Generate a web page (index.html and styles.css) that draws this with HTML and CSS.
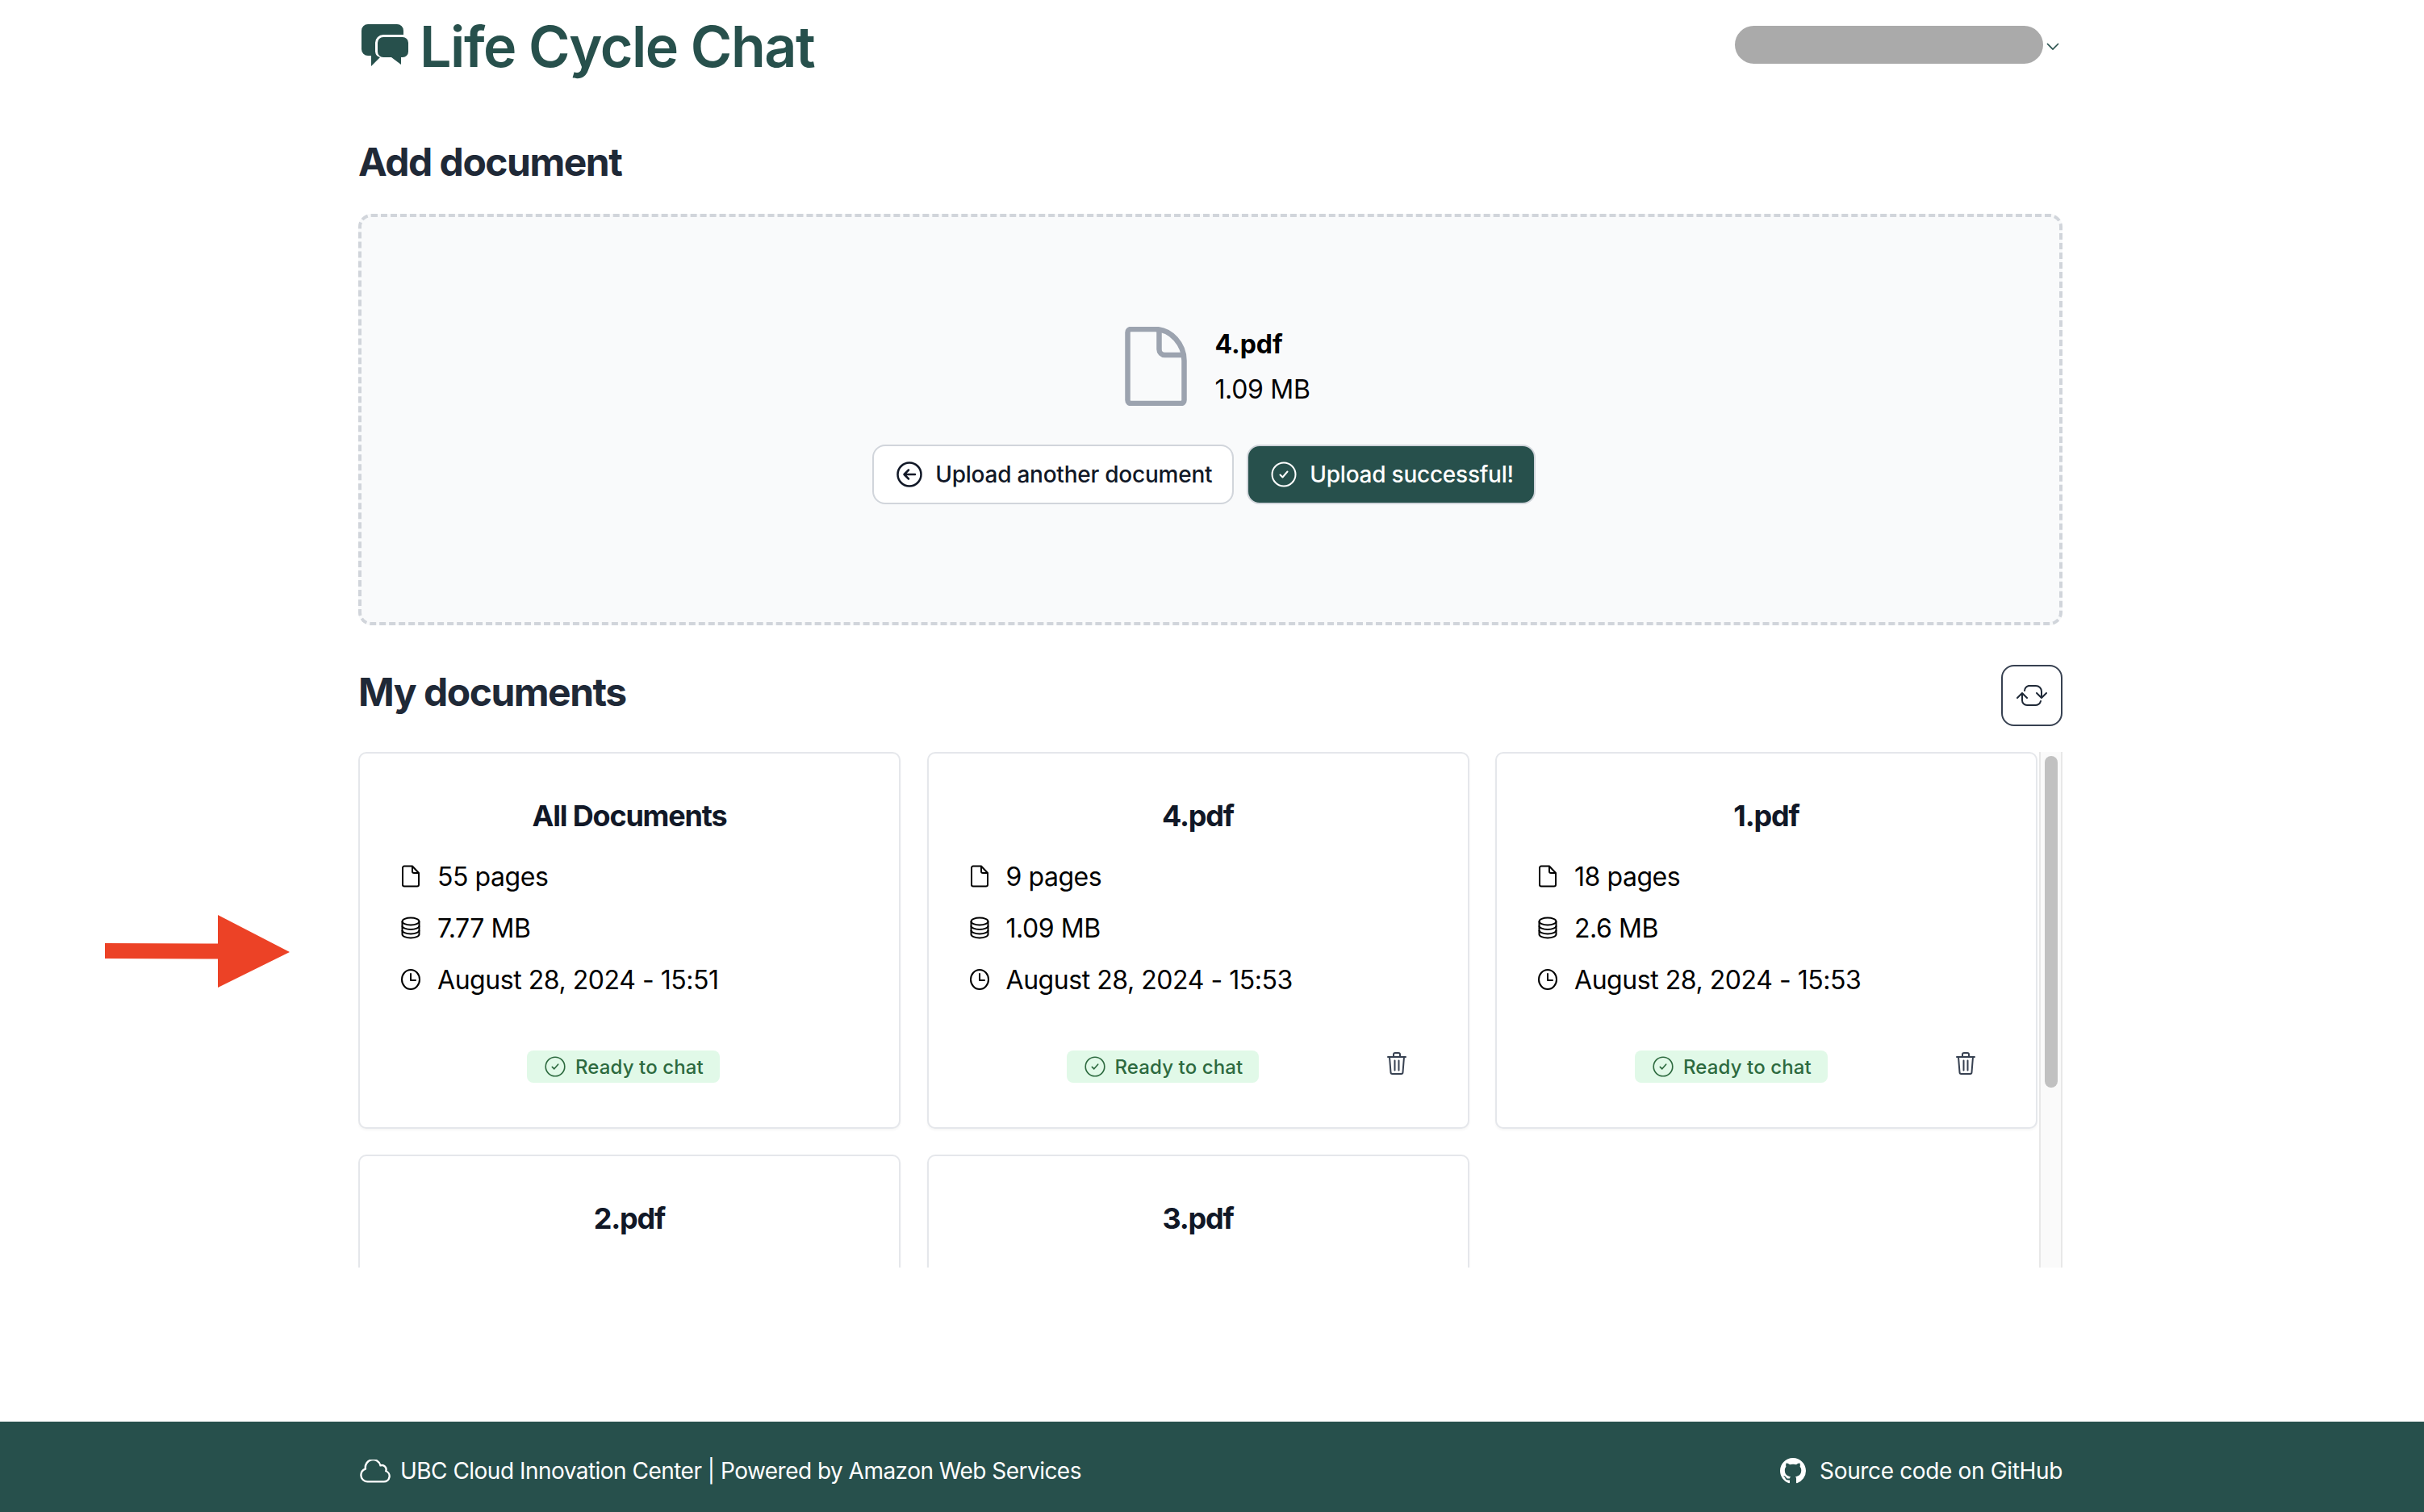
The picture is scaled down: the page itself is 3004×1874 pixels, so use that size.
FILE: index.html
```html
<!DOCTYPE html>
<html lang="en">
<head>
    <meta charset="UTF-8">
    <meta name="viewport" content="width=device-width, initial-scale=1.0">
    <title>Life Cycle Chat</title>
    <link rel="stylesheet" href="styles.css">
</head>
<body>
    <svg width="0" height="0" class="icon-defs">
        <symbol id="i-file" viewBox="0 0 24 28"><path d="M14 1.500H4a2 2 0 0 0-2 2v21a2 2 0 0 0 2 2h16a2 2 0 0 0 2-2V10L14 1.500zM14 1.500V8a2 2 0 0 0 2 2h6" fill="none" stroke="currentColor" stroke-width="2" stroke-linejoin="round"/></symbol>
        <symbol id="i-db" viewBox="0 0 24 28"><g fill="none" stroke="currentColor" stroke-width="2"><ellipse cx="12" cy="6" rx="10.500" ry="4.500"/><path d="M1.500 6v16c0 2.500 4.700 4.500 10.500 4.500S22.500 24.500 22.500 22V6"/><path d="M1.500 11.500c0 2.500 4.700 4.500 10.500 4.500s10.500-2 10.500-4.500M1.500 17c0 2.500 4.700 4.500 10.500 4.500s10.500-2 10.500-4.500"/></g></symbol>
        <symbol id="i-clock" viewBox="0 0 24 26"><g fill="none" stroke="currentColor" stroke-width="2"><ellipse cx="12" cy="13" rx="11" ry="12"/><path d="M12 6v8h6" stroke-linecap="round" stroke-linejoin="round"/></g></symbol>
        <symbol id="i-check" viewBox="0 0 32 32"><g fill="none" stroke="currentColor" stroke-width="2"><circle cx="16" cy="16" r="14.500"/><path d="M11.500 16.500l3 3 6-7" stroke-linecap="round" stroke-linejoin="round"/></g></symbol>
        <symbol id="i-trash" viewBox="0 0 24 28"><g fill="none" stroke="currentColor" stroke-width="2" stroke-linecap="round" stroke-linejoin="round"><path d="M1 6h22M8 6V3a2 2 0 0 1 2-2h4a2 2 0 0 1 2 2v3"/><path d="M3 6l1.500 19a2 2 0 0 0 2 2h11a2 2 0 0 0 2-2L21 6"/><path d="M9.500 10.500v12M14.500 10.500v12"/></g></symbol>
    </svg>

    <div class="arrow-note">
        <svg width="229" height="90" viewBox="0 0 229 90"><path d="M0 35l140 .5V0l89 46-89 44V54.500L0 54z" fill="#ec4226"/></svg>
    </div>

    <main class="page">
        <header class="topbar">
            <div class="brand">
                <svg class="brand-icon" viewBox="0 0 58 52" width="58" height="52" fill="#27504c">
                    <path d="M8 0h36a8 8 0 0 1 8 8v5H27a10 10 0 0 0-10 10v11a8 8 0 0 0 6 7L12 52V39H8a8 8 0 0 1-8-8V8a8 8 0 0 1 8-8z"/>
                    <path d="M27 16h24a7 7 0 0 1 7 7v11a7 7 0 0 1-7 7h-2v9l-12-9H27a7 7 0 0 1-7-7V23a7 7 0 0 1 7-7z"/>
                </svg>
                <span class="brand-name">Life Cycle Chat</span>
            </div>
            <div class="user-menu">
                <div class="user-pill"></div>
                <svg class="chevron" width="16" height="10" viewBox="0 0 16 10"><path d="M1 1l7 7 7-7" fill="none" stroke="#27504c" stroke-width="1.600"/></svg>
            </div>
        </header>

        <h2 class="section-title add-title">Add document</h2>
        <section class="dropzone">
            <div class="file-row">
                <svg width="77" height="98" viewBox="0 0 76 98" fill="none" stroke="#9ca3af" stroke-width="6.500" stroke-linejoin="round">
                    <path d="M37 3H7a4 4 0 0 0-4 4v84a4 4 0 0 0 4 4h62a4 4 0 0 0 4-4V42C73 22 57 3 37 3z"/>
                    <path d="M42 5v23a7 7 0 0 0 7 7h23"/>
                </svg>
                <div class="file-info">
                    <div class="file-name">4.pdf</div>
                    <div class="file-size">1.09 MB</div>
                </div>
            </div>
            <div class="button-row">
                <button class="btn btn-light">
                    <svg width="32" height="32" viewBox="0 0 32 32" fill="none" stroke="currentColor" stroke-width="2.500" stroke-linecap="round" stroke-linejoin="round"><circle cx="16" cy="16" r="14.500"/><path d="M23 16H10M15 10.500L9.500 16l5.500 5.500"/></svg>
                    Upload another document
                </button>
                <button class="btn btn-dark">
                    <svg width="32" height="32"><use href="#i-check"/></svg>
                    Upload successful!
                </button>
            </div>
        </section>

        <div class="docs-head">
            <h2 class="section-title">My documents</h2>
            <button class="refresh">
                <svg width="38" height="28" viewBox="0 0 38 28" fill="none" stroke="currentColor" stroke-width="2" stroke-linecap="round" stroke-linejoin="round">
                    <path d="M10 8a7 7 0 0 1 5-6h9a7 7 0 0 1 7 7v8M25 11l6 6 6-6"/>
                    <path d="M7 11v9a6 6 0 0 0 6 6h11a7 7 0 0 0 6-5M1 17l6-6 6 6"/>
                </svg>
            </button>
        </div>

        <div class="doc-scroll">
            <div class="doc-grid">
                <article class="doc-card doc-card-all">
                    <h3 class="doc-title">All Documents</h3>
                    <ul class="doc-meta">
                        <li><svg width="24" height="28"><use href="#i-file"/></svg>55 pages</li>
                        <li><svg width="24" height="28"><use href="#i-db"/></svg>7.77 MB</li>
                        <li><svg width="24" height="26"><use href="#i-clock"/></svg>August 28, 2024 - 15:51</li>
                    </ul>
                    <div class="doc-foot">
                        <span class="badge"><svg width="26" height="26"><use href="#i-check"/></svg>Ready to chat</span>
                    </div>
                </article>
                <article class="doc-card">
                    <h3 class="doc-title">4.pdf</h3>
                    <ul class="doc-meta">
                        <li><svg width="24" height="28"><use href="#i-file"/></svg>9 pages</li>
                        <li><svg width="24" height="28"><use href="#i-db"/></svg>1.09 MB</li>
                        <li><svg width="24" height="26"><use href="#i-clock"/></svg>August 28, 2024 - 15:53</li>
                    </ul>
                    <div class="doc-foot">
                        <span class="badge"><svg width="26" height="26"><use href="#i-check"/></svg>Ready to chat</span>
                        <svg class="trash" width="24" height="28"><use href="#i-trash"/></svg>
                    </div>
                </article>
                <article class="doc-card">
                    <h3 class="doc-title">1.pdf</h3>
                    <ul class="doc-meta">
                        <li><svg width="24" height="28"><use href="#i-file"/></svg>18 pages</li>
                        <li><svg width="24" height="28"><use href="#i-db"/></svg>2.6 MB</li>
                        <li><svg width="24" height="26"><use href="#i-clock"/></svg>August 28, 2024 - 15:53</li>
                    </ul>
                    <div class="doc-foot">
                        <span class="badge"><svg width="26" height="26"><use href="#i-check"/></svg>Ready to chat</span>
                        <svg class="trash" width="24" height="28"><use href="#i-trash"/></svg>
                    </div>
                </article>
                <article class="doc-card">
                    <h3 class="doc-title">2.pdf</h3>
                </article>
                <article class="doc-card">
                    <h3 class="doc-title">3.pdf</h3>
                </article>
            </div>
            <div class="scroll-track"><div class="scroll-thumb"></div></div>
        </div>
    </main>

    <footer class="site-footer">
        <div class="footer-item">
            <svg width="38" height="29" viewBox="1.500 4.500 21 15.750" fill="none" stroke="#fff" stroke-width="1.300" stroke-linejoin="round"><path d="M2.250 15a4.500 4.500 0 0 0 4.500 4.500H18a3.750 3.750 0 0 0 1.332-7.257 3 3 0 0 0-3.758-3.848 5.250 5.250 0 0 0-10.233 2.330A4.500 4.500 0 0 0 2.250 15z"/></svg>
            <span>UBC Cloud Innovation Center | Powered by Amazon Web Services</span>
        </div>
        <div class="footer-item footer-source">
            <svg width="32" height="32" viewBox="0 0 16 16" fill="#fff"><path d="M8 0C3.580 0 0 3.580 0 8c0 3.540 2.290 6.530 5.470 7.590.4.070.55-.17.55-.38 0-.19-.01-.82-.01-1.490-2.010.37-2.530-.49-2.690-.94-.09-.23-.48-.94-.82-1.130-.28-.15-.68-.52-.01-.53.63-.01 1.080.58 1.230.82.72 1.210 1.870.87 2.330.66.07-.52.28-.87.51-1.070-1.780-.2-3.640-.89-3.640-3.950 0-.87.31-1.590.82-2.150-.08-.2-.36-1.020.08-2.120 0 0 .67-.21 2.200.82.64-.18 1.320-.27 2-.27.68 0 1.360.09 2 .27 1.530-1.040 2.200-.82 2.200-.82.44 1.100.16 1.920.08 2.120.51.56.82 1.270.82 2.150 0 3.070-1.870 3.750-3.650 3.950.29.25.54.73.54 1.480 0 1.070-.01 1.930-.01 2.200 0 .21.15.46.55.38A8.013 8.013 0 0 0 16 8c0-4.420-3.580-8-8-8z"/></svg>
            <span>Source code on GitHub</span>
        </div>
    </footer>
</body>
</html>
```

FILE: styles.css
```css
* {
    box-sizing: border-box;
}
html, body {
    height: 100%;
}
body {
    margin: 0;
    display: flex;
    flex-direction: column;
    min-height: 1874px;
    overflow: hidden;
    font-family: Inter, "Noto Sans", sans-serif;
    font-size: 32px;
    color: #000;
    background-color: #fff;
}
.icon-defs {
    position: absolute;
}
.arrow-note {
    position: absolute;
    left: 130px;
    top: 1134px;
    line-height: 0;
}
.page {
    flex: 1;
    width: 2112px;
    margin-left: 444px;
}
.topbar {
    display: flex;
    justify-content: space-between;
    align-items: center;
    height: 112px;
}
.brand {
    display: flex;
    align-items: center;
    gap: 14px;
    padding-left: 4px;
}
.brand-name {
    margin-top: 3px;
    font-size: 70px;
    line-height: 80px;
    font-weight: 600;
    letter-spacing: -1.5px;
    color: #27504c;
}
.user-menu {
    display: flex;
    align-items: center;
    gap: 4px;
    margin-right: 4px;
}
.user-pill {
    width: 382px;
    height: 47px;
    margin-top: -1px;
    border-radius: 24px;
    background-color: #aaa;
}
.chevron {
    margin-top: 4px;
}
.section-title {
    margin: 0;
    font-size: 48px;
    line-height: 64px;
    font-weight: 700;
    letter-spacing: -1.5px;
    color: #1f2937;
}
.add-title {
    margin-top: 57px;
    margin-bottom: 32px;
}
.dropzone {
    height: 510px;
    padding-top: 132px;
    display: flex;
    flex-direction: column;
    align-items: center;
    border: 4px dashed #d1d5db;
    border-radius: 16px;
    background-color: #f9fafb;
}
.file-row {
    display: flex;
    align-items: center;
    gap: 34px;
    margin-left: 18px;
}
.file-info {
    padding-top: 2px;
}
.file-name {
    font-weight: 700;
    line-height: 48px;
    margin-bottom: 8px;
}
.file-size {
    line-height: 48px;
    letter-spacing: -0.3px;
}
.button-row {
    display: flex;
    gap: 16px;
    margin-top: 44px;
    margin-right: 16px;
}
.btn {
    display: flex;
    align-items: center;
    gap: 16px;
    height: 74px;
    padding: 0 25px 0 28px;
    font-family: inherit;
    font-size: 28px;
    font-weight: 500;
    letter-spacing: -0.24px;
    border: 2px solid #d1d5db;
    border-radius: 16px;
    cursor: pointer;
}
.btn-light {
    background-color: #fff;
    color: #111827;
}
.btn-dark {
    background-color: #27504c;
    color: #fff;
}
.docs-head {
    display: flex;
    justify-content: space-between;
    align-items: flex-start;
    margin-top: 49px;
    margin-bottom: 32px;
}
.docs-head .section-title {
    margin-top: 2px;
}
.refresh {
    display: flex;
    align-items: center;
    justify-content: center;
    width: 76px;
    height: 76px;
    padding: 0;
    border: 2px solid #374151;
    border-radius: 16px;
    background-color: #fff;
    color: #1f2937;
    cursor: pointer;
}
.doc-scroll {
    display: flex;
    justify-content: space-between;
    height: 639px;
}
.doc-grid {
    display: grid;
    grid-template-columns: repeat(3, 672px);
    grid-auto-rows: 467px;
    gap: 32px 32.5px;
    overflow: hidden;
    padding-bottom: 2px;
    width: 2081px;
}
.scroll-track {
    width: 29px;
    padding: 5px 5px 0;
    background-color: #fafafa;
    border-left: 2px solid #e8e8e8;
    border-right: 2px solid #e8e8e8;
}
.scroll-thumb {
    width: 16px;
    height: 411px;
    border-radius: 8px;
    background-color: #c1c1c1;
}
.doc-card {
    padding: 49px 51px 0;
    border: 2px solid #e5e7eb;
    border-radius: 10px;
    background-color: #fff;
    box-shadow: 0 2px 3px rgba(0, 0, 0, 0.04);
}
.doc-title {
    margin: 0 0 15px;
    font-size: 36px;
    line-height: 56px;
    font-weight: 700;
    letter-spacing: -1.2px;
    text-align: center;
    color: #111827;
}
.doc-meta {
    margin: 0;
    padding: 0;
    list-style: none;
    letter-spacing: -0.45px;
}
.doc-meta li {
    display: flex;
    align-items: center;
    gap: 21px;
    height: 64px;
}
.doc-foot {
    display: flex;
    align-items: flex-start;
    margin-top: 56px;
    margin-left: -51px;
}
.badge {
    display: flex;
    align-items: center;
    gap: 12px;
    height: 40px;
    margin-left: 171px;
    padding: 0 20px 0 22px;
    font-size: 24px;
    font-weight: 500;
    letter-spacing: 0.12px;
    border-radius: 8px;
    color: #2d6a3f;
    background-color: #e1f9e8;
}
.doc-card-all .badge {
    margin-left: 207px;
}
.trash {
    margin-left: 159px;
    margin-top: 2px;
    color: #374151;
}
.site-footer {
    display: flex;
    justify-content: space-between;
    align-items: center;
    height: 112px;
    padding: 10px 448px 0 446px;
    font-size: 28px;
    letter-spacing: -0.52px;
    color: #fff;
    background-color: #27504c;
}
.footer-item {
    display: flex;
    align-items: center;
    gap: 12px;
}
.footer-source {
    gap: 17px;
    letter-spacing: -0.35px;
}
```
